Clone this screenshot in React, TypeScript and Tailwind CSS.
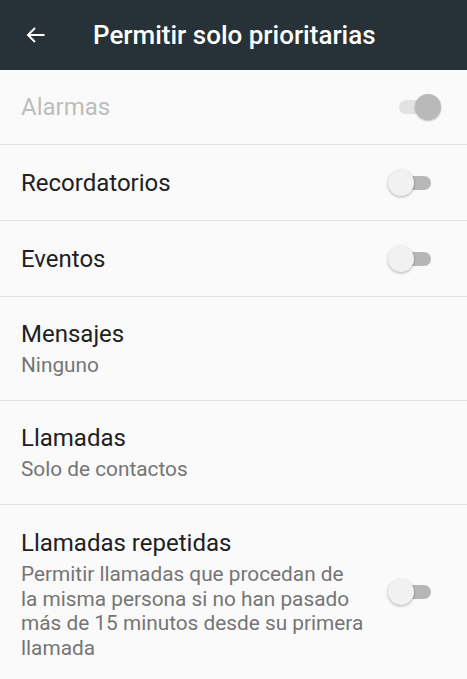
import React from "react";

function Toggle({ on }: { on?: boolean }) {
  if (on) {
    return (
      <div className="flex items-center w-[54px] h-[28px] shrink-0">
        <div className="ml-[11px] w-[38px] h-[14px] rounded-full bg-[#e2e2e2] shrink-0" />
        <div className="-ml-[22px] w-[26px] h-[26px] rounded-full bg-[#b9b9b9] shadow-[0_1px_2px_rgba(0,0,0,0.25)] shrink-0" />
      </div>
    );
  }
  return (
    <div className="flex items-center w-[54px] h-[28px] shrink-0">
      <div className="relative z-10 w-[26px] h-[26px] rounded-full bg-[#f1f1f1] shadow-[0_1px_3px_rgba(0,0,0,0.3)] shrink-0" />
      <div className="-ml-[20px] w-[37px] h-[14px] rounded-full bg-[#b7b7b7] shrink-0" />
    </div>
  );
}

function Row({
  title,
  sub,
  toggle,
  disabled,
  on,
  className,
  last,
}: {
  title: string;
  sub?: React.ReactNode;
  toggle?: boolean;
  disabled?: boolean;
  on?: boolean;
  className: string;
  last?: boolean;
}) {
  return (
    <div className={`flex items-center pl-[21px] pr-[25px] ${last ? "" : "border-b border-[#e3e3e3]"} ${className}`}>
      <div className="flex-1 min-w-0 self-stretch flex flex-col justify-center">
        <div className={`text-[24px] leading-[28px] ${disabled ? "text-[#bdbdbd]" : "text-[#212121]"}`}>{title}</div>
        {sub && <div className="text-[20.8px] leading-[24.5px] text-[#757575] mt-[5px] whitespace-nowrap">{sub}</div>}
      </div>
      {toggle && <Toggle on={on} />}
    </div>
  );
}

export default function App() {
  return (
    <div className="w-[467px] h-[679px] bg-[#fafafa] overflow-hidden" style={{ fontFamily: "Roboto, 'Noto Sans', sans-serif" }}>
      <div className="h-[70px] bg-[#263238] flex items-center">
        <svg className="ml-[24px]" width="24" height="24" viewBox="0 0 24 24" fill="none" stroke="#ffffff" strokeWidth="2">
          <path d="M20.5 12H4.5" />
          <path d="M11 5l-7 7 7 7" strokeLinejoin="miter" />
        </svg>
        <div className="ml-[45px] text-white text-[26px] font-medium">Permitir solo prioritarias</div>
      </div>
      <Row title="Alarmas" toggle on disabled className="h-[75px]" />
      <Row title="Recordatorios" toggle className="h-[76px]" />
      <Row title="Eventos" toggle className="h-[76px]" />
      <Row title="Mensajes" sub="Ninguno" className="h-[104px]" />
      <Row title="Llamadas" sub="Solo de contactos" className="h-[104px]" />
      <Row
        title="Llamadas repetidas"
        sub={
          <>
            Permitir llamadas que procedan de
            <br />
            la misma persona si no han pasado
            <br />
            más de 15 minutos desde su primera
            <br />
            llamada
          </>
        }
        toggle
        last
        className="h-[174px] [&>div:first-child]:justify-start [&>div:first-child]:pt-[24px]"
      />
    </div>
  );
}
